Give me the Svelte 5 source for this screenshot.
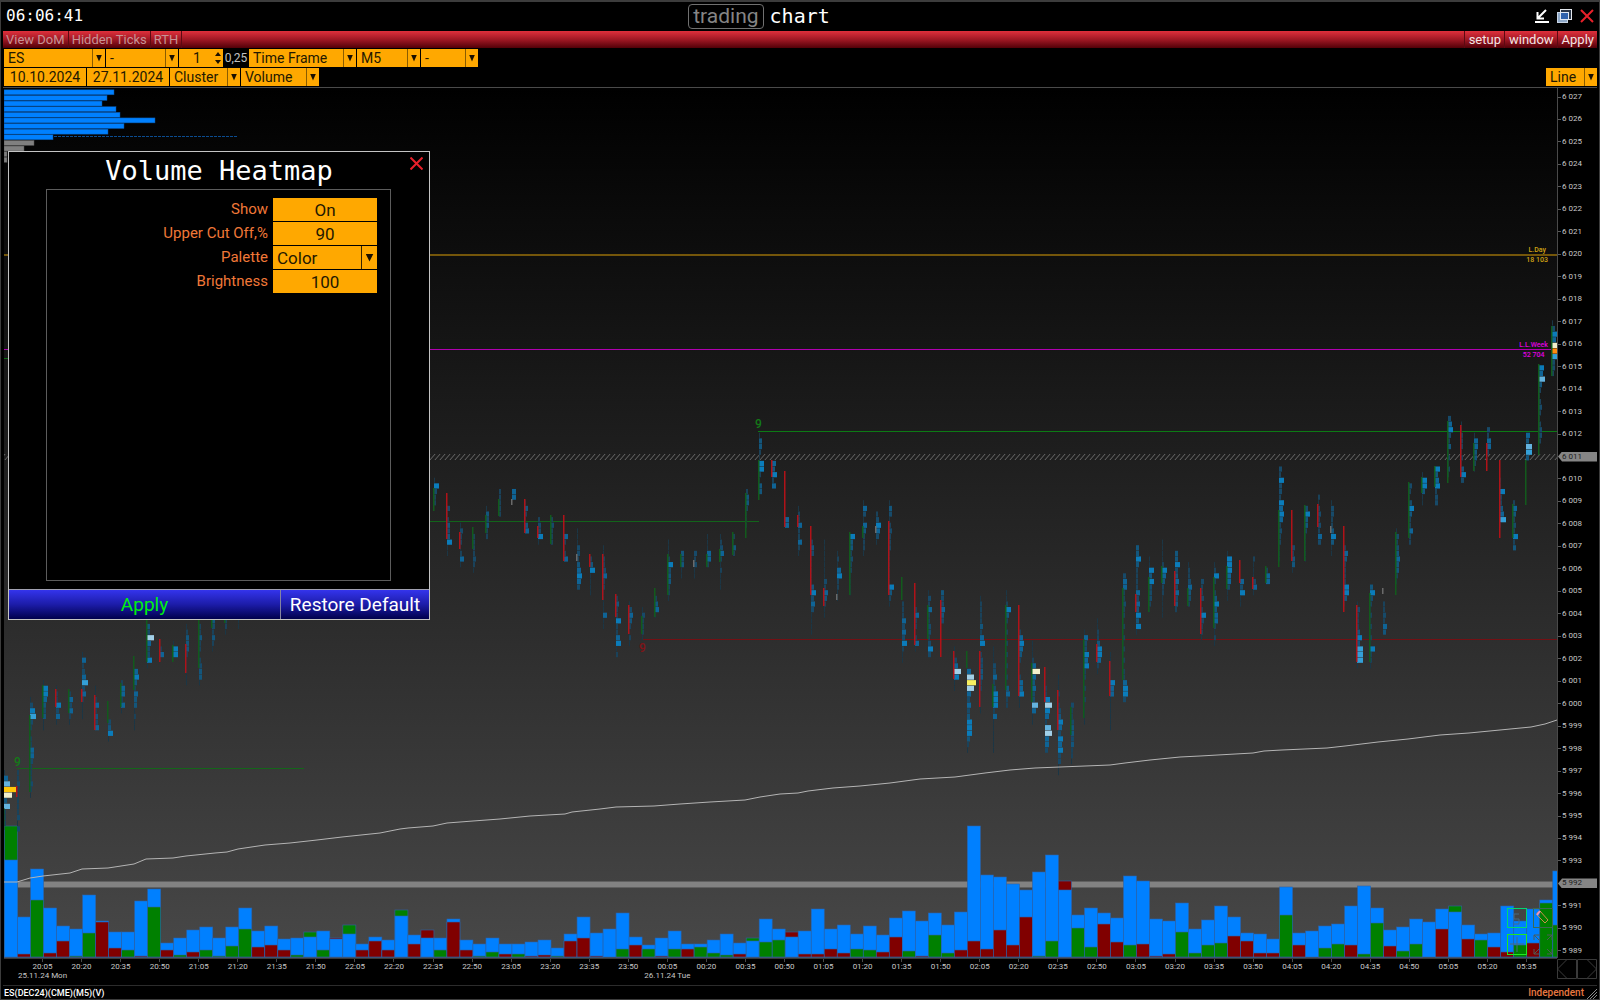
<script>
  // Volume bars, one per five-minute column: total height, colour and height of the second series.
  const volumeText =
    '97g131 40r3 88g57 49r4 31r16 28g1 62g24 36r35 25r9 25g7 56r1 68g50 14r7 19g2 27r5 30g7 19g1 30g11 49g28 26r10 ' +
    '31r12 18r7 19g2 20g25 26g7 18r19 23g32 13r7 20r16 17r7 41g47 22r13 19r27 19g7 38r35 17r7 13g1 19g5 13r3 13g3 ' +
    '15r1 17r2 9g1 23r16 40r19 24r1 28g0 44g8 20r12 12g8 19r1 26g8 13r8 13g10 17g4 23g2 14r3 16g19 38g15 28g17 ' +
    '20r25 26r3 48r3 28r8 32r4 23g8 31g7 22r5 39r20 46g6 36r1 44g22 32g4 45r7 131r16 82r8 80r27 73r12 67r40 85g1 ' +
    '102g16 67r76 42g29 49g10 44r33 39r15 81g12 76r13 38r1 36r3 54g25 28g4 37g12 51g14 40r21 24r16 23r4 18r4 70g42 24r12 ' +
    '26g0 31g9 33g13 51r12 71g3 49g34 27r11 30g6 38g13 35g0 48r28 45g51 32r18 23g17 24r10 51r5 36g12 48r14 57g54 86g32';

  // Cluster columns: column, body colour, body top, body bottom, first row y, row intensities from the top down.
  const clusterText = `0 g 808 830 769 047o937111
1 r 786 797 770 11211111202
2 g 715 792 697 025621011442111210
3 g 685 718 679 055432300
4 r 689 707 685 0115240
5 g 689 713 691 142410
6 r 689 702 652 041246241000
7 r 695 730 685 00141324
8 g 701 723 719 2350
9 g 683 707 679 144140
10 g 656 690 668 45314330100
11 g 590 662 623 32842250
12 r 639 662 646 14
13 g 645 662 640 055
14 r 644 673 623 01333100000
15 g 615 668 623 11311012330
16 g 600 628 617 321310
17 g 600 623 617 110
18 n 615 616 617 00
33 g 488 511 478 05211
34 r 493 539 506 201323500
35 r 532 549 523 02110140
36 g 527 549 532 1111210
37 g 515 533 506 032311
38 g 499 516 489 11111
39 n 499 505 489 44
40 r 499 533 500 031034
41 r 526 538 517 12250
42 g 515 544 515 12111
43 r 515 561 533 41014
44 n 554 561 528 00022134542
45 r 554 567 556 1350000
46 r 554 600 545 001124110000400
47 r 594 617 596 13115114501
48 r 605 634 601 02431010
49 g 616 634 606 021110
50 g 588 617 595 1340
51 g 554 595 539 00015233110
52 g 554 567 550 32300
53 n 560 567 550 21200
54 g 554 567 533 000441
55 g 549 562 534 0124101000
56 g 532 555 533 1031
57 g 493 538 489 1331000
58 g 460 500 433 03310551033
59 r 460 477 461 43514
60 r 471 527 517 44
61 r 515 527 506 011411410
62 r 526 595 539 13200000352420000
63 r 588 606 539 00000002143100
64 n 594 600 550 010451100
65 g 532 595 533 53312110000
66 g 526 538 500 0420431110
67 n 526 533 512 125420
68 r 521 595 500 0320121110000005310
69 g 577 600 601 11142425100
70 r 583 645 607 14110140
71 g 605 639 590 021411221252
72 r 600 657 590 322432
73 r 651 679 647 00248500
74 g 651 668 663 048y842423555310
75 r 651 707 596 011113145012233110000
76 g 684 707 646 0002241255514000000
77 g 605 690 590 001531010101010103411
78 r 605 696 630 14543100144500
79 g 663 702 641 000149434227400
80 r 667 702 680 0115854178442
81 r 690 730 674 000101235425452200
82 g 707 735 703 21123323110
83 g 639 718 630 04225451101010000
84 r 644 662 618 0011355410
85 r 661 696 652 00000544000000
86 g 588 680 573 24411211010101010114552
87 r 594 612 545 3353111142435350
88 g 577 612 556 0053522210
89 g 566 583 539 00001543110000
90 r 571 606 550 33523424231
91 g 588 606 562 01124321
92 r 588 634 578 21120152110
93 g 577 628 562 015101353441010
94 g 566 589 550 055544200
95 r 560 583 578 42500
96 r 577 589 556 1000240
97 g 566 583 567 144
98 g 510 567 467 21522154541211000
99 r 510 561 544 21330
100 g 505 561 506 2533100000
101 r 504 527 495 101212142
102 n 526 533 501 0221135300
103 r 526 612 544 14311115530
104 r 605 662 601 021113536660
105 g 593 662 584 352101010105110
106 n 588 594 601 112143
107 g 532 595 530 0212343310
108 g 482 538 484 21025311411
109 g 477 493 472 055300
110 g 466 487 467 5345122
111 g 421 483 415 24521301010
112 r 425 477 421 00111010352
113 g 443 471 432 0443310
114 r 443 471 427 214410
115 r 460 538 478 005113460
116 g 504 538 501 143121513
117 g 460 505 432 43763
118 g 364 455 364 54731012101221
119 g 326 376 320 02549p6221`;

  const profile = [
    [110, 'b'], [103, 'b'], [98, 'b'], [112, 'b'], [116, 'b'], [151, 'b'], [120, 'b'],
    [104, 'b'], [49, 'b'], [30, 'n'], [20, 'n'], [3, 'n'], [3, 'n']
  ];

  const shades = {
    0: [1, '#1b3645'], 1: [2, '#1a425a'], 2: [3, '#174a69'], 3: [3, '#13567c'], 4: [4, '#0f6496'],
    5: [5, '#0b7cba'], 6: [6, '#34a0d8'], 7: [6, '#64b3df'], 8: [7, '#a2d0e8'], 9: [8, '#f2f0cc'],
    y: [9, '#f8f060'], o: [12, '#ffc60a'], p: [8, '#ff8c10']
  };
  const bodyColors = { g: '#125a1c', r: '#b01218', n: '#6a6a6a' };

  const left = 4;
  const base = 957;
  const step = 13.01;
  const rowTop = 89.8;
  const rowStep = 5.622;

  const volumes = volumeText.split(' ').map((item, i) => {
    const [, total, kind, part] = item.match(/(\d+)([gr])(\d+)/);
    const bars = [
      { h: Number(total), fill: '#0080ff' },
      { h: Number(part), fill: kind === 'g' ? '#008000' : '#800000' }
    ];
    return { x: left + 0.6 + i * step, bars: bars.sort((a, b) => b.h - a.h) };
  });

  const clusters = clusterText.split('\n').map((line) => {
    const [col, kind, top, bottom, first, rows] = line.split(' ');
    const x = Math.round(left + 0.2 + Number(col) * step);
    const start = Math.round((Number(first) - rowTop) / rowStep);
    const cells = [...rows].map((code, i) => ({
      y: rowTop + (start + i) * rowStep,
      w: shades[code][0],
      fill: shades[code][1]
    }));
    return { x, top: Number(top), height: bottom - top, fill: bodyColors[kind], cells };
  });

  const average =
    '4,882 17,882 30,878 43,876 70,873 82,869 108,868 134,864 146,859 173,858 186,856 215,853 227,852 238,849 265,845 ' +
    '290,843 317,840 342,837 380,833 400,829 408,828 433,826 447,823 473,821 500,819 530,816 565,814 572,812 600,809 ' +
    '616,807 654,806 680,804 710,802 745,800 760,797 780,794 798,793 808,791 833,788 860,786 890,783 920,779 955,777 ' +
    '985,773 1010,770 1035,768 1060,767 1110,765 1125,763 1150,760 1180,757 1200,756 1253,753 1264,751 1282,750 ' +
    '1327,748 1345,746 1378,742 1408,739 1440,735 1469,733 1500,730 1531,727 1545,724 1557,720';

  const prices = Array.from({ length: 39 }, (_, i) => {
    const n = String(6027 - i);
    return { text: n[0] + ' ' + n.slice(1), tag: n === '6011' || n === '5992' };
  });

  const times = Array.from({ length: 39 }, (_, i) => {
    const m = (20 * 60 + 5 + i * 15) % 1440;
    const text = String(Math.floor(m / 60)).padStart(2, '0') + ':' + String(m % 60).padStart(2, '0');
    return { text, date: i === 0 ? '25.11.24 Mon' : i === 16 ? '26.11.24 Tue' : '' };
  });
</script>

{#snippet pick(label, value, size)}
  <span class="pick {size}">
    <select aria-label={label}><option>{value}</option></select>
    <span class="arrow" aria-hidden="true"></span>
  </span>
{/snippet}

<div class="app">
  <header>
    <time>06:06:41</time>
    <h1><span class="badge">trading</span><span class="word">chart</span></h1>
    <div class="window-buttons">
      <button aria-label="Minimize">
        <svg width="14" height="14" viewBox="0 0 14 14"><path d="M11 1 3 9M2.500 3v6.500H9M0 13h14" fill="none" stroke="#fff" stroke-width="2" /></svg>
      </button>
      <button aria-label="Maximize">
        <svg width="15" height="14" viewBox="0 0 15 14">
          <rect x="3.500" y=".5" width="11" height="10" fill="#2a3648" stroke="#e4e8ee" />
          <rect x=".5" y="3.500" width="10" height="10" fill="#8ea8c8" stroke="#c8d4e4" />
          <rect x="3.500" y="3.500" width="8" height="7" fill="#2f62ad" stroke="#dfe8f4" />
        </svg>
      </button>
      <button aria-label="Close">
        <svg width="14" height="14" viewBox="0 0 14 14"><path d="M1 1l12 12M13 1 1 13" stroke="#e8202a" stroke-width="2" /></svg>
      </button>
    </div>
  </header>

  <nav>
    <button class="muted">View DoM</button>
    <button class="muted">Hidden Ticks</button>
    <button class="muted">RTH</button>
    <span class="spring"></span>
    <button>setup</button>
    <button>window</button>
    <button>Apply</button>
  </nav>

  <div class="tools">
    <div class="tool-row">
      {@render pick('Symbol', 'ES', 'w101')}
      {@render pick('Contract', '-', 'w72')}
      <span class="spin">
        <input aria-label="Step" value="1" />
        <span class="spin-buttons">
          <button aria-label="Increase step"></button>
          <button aria-label="Decrease step" class="down"></button>
        </span>
      </span>
      <span class="tick">0,25</span>
      {@render pick('Period type', 'Time Frame', 'w107')}
      {@render pick('Period', 'M5', 'w63')}
      {@render pick('Session', '-', 'w57')}
    </div>
    <div class="tool-row">
      <input class="date" aria-label="From date" value="10.10.2024" />
      <input class="date" aria-label="To date" value="27.11.2024" />
      {@render pick('Chart type', 'Cluster', 'w70')}
      {@render pick('Cluster data', 'Volume', 'w78')}
      <span class="spring"></span>
      {@render pick('Drawing tool', 'Line', 'w51')}
    </div>
  </div>

  <main>
    <div class="plot">
      <svg class="canvas" viewBox="4 88 1553 870" preserveAspectRatio="none" aria-label="Price clusters and volume">
        <defs>
          <pattern id="hatch" width="5" height="6" patternUnits="userSpaceOnUse" y="454">
            <path d="M-1 7 6 -1M-6 7 1 -1M4 7 11 -1" stroke="#6a6a6a" stroke-width="1" fill="none" />
          </pattern>
        </defs>

        {#each profile as [w, kind], i}
          <rect x="4" y={rowTop + i * rowStep} width={w} height="5" fill={kind === 'b' ? '#0080ff' : '#808080'} stroke={kind === 'b' ? '#0a4d94' : '#505050'} stroke-width=".5" />
        {/each}
        <path d="M54 136.500H238" stroke="#0b4c90" stroke-dasharray="3 1" />

        <rect x="17" y="881" width="1540" height="7" fill="#606060" />
        <rect x="17" y="882" width="1540" height="5" fill="#828282" />

        {#each volumes as v}
          {#each v.bars as bar}
            <rect x={v.x} y={base - bar.h} width={step} height={bar.h} fill={bar.fill} stroke="#2c62a8" stroke-width=".6" />
          {/each}
        {/each}

        <rect x="4" y="454" width="1553" height="6" fill="url(#hatch)" />
        <rect x="4" y="254" width="1553" height="2" fill="#74560a" />
        <rect x="4" y="349" width="1553" height="1" fill="#b000b0" />
        <rect x="4" y="358" width="10" height="1" fill="#0c6a14" />
        <rect x="758" y="431" width="799" height="1" fill="#0c7a14" />
        <rect x="430" y="521" width="329" height="1" fill="#12641a" />
        <rect x="17" y="768" width="287" height="1" fill="#14661a" />
        <rect x="642" y="639" width="915" height="1" fill="#741014" />

        {#each clusters as c}
          {#each c.cells as cell}
            <rect x={c.x} y={cell.y} width={cell.w} height="5.200" fill={cell.fill} />
          {/each}
          <rect x={c.x - 1} y={c.top} width="1.500" height={c.height} fill={c.fill} />
        {/each}

        <polyline points={average} fill="none" stroke="#b4b4b4" stroke-width="1" />

        <g fill="none">
          <rect x="1507.500" y="908.500" width="19" height="19" stroke="#00d873" />
          <rect x="1507.500" y="934.500" width="19" height="20" stroke="#20e820" />
          <rect x="1533.500" y="908.500" width="19" height="19" stroke="#3c6a50" />
          <path d="M1519 914h-5v5h5v5h-5M1510 944h14M1517 937v15" stroke="#4a6a80" />
          <path d="M1537 913l3-2 8 9-3 3-8-8z" stroke="#c89048" />
          <path d="M1537 915l3-4" stroke="#f090c0" stroke-width="2" />
          <path d="M1534 940v-5h5M1534 935l5 5M1552 940v-5h-5M1552 935l-5 5M1534 949v5h5M1534 954l5-5M1552 949v5h-5M1552 954l-5-5" stroke="#4c5c56" />
        </g>
      </svg>
      <span class="mark day">L.Day<br />18 103</span>
      <span class="mark week">L.L.Week<br />52 704</span>
      <span class="nine first">9</span>
      <span class="nine second">9</span>
      <span class="nine low">9</span>
    </div>

    <div class="prices">
      {#each prices as p}
        <span class:tag={p.tag}>{p.text}</span>
      {/each}
    </div>

    <div class="times">
      {#each times as t}
        <span>{t.text}{#if t.date}<small>{t.date}</small>{/if}</span>
      {/each}
    </div>

    <div class="scroll">
      <button aria-label="Scroll back"><svg width="20" height="20" viewBox="0 0 20 20"><path d="M.5.500h19v19H.5zM10 .5.500 10l9.500 9.500" fill="none" stroke="#3a3a3a" /></svg></button>
      <button aria-label="Scroll forward"><svg width="20" height="20" viewBox="0 0 20 20"><path d="M.5.500h19v19H.5zM10 .5l9.500 9.500-9.500 9.500" fill="none" stroke="#3a3a3a" /></svg></button>
    </div>

    <form class="dialog" role="dialog" aria-labelledby="heatmap-title" onsubmit={(e) => e.preventDefault()}>
      <h2 id="heatmap-title">Volume Heatmap</h2>
      <button type="button" class="close" aria-label="Close dialog">
        <svg width="13" height="13" viewBox="0 0 13 13"><path d="M.5.500l12 12M12.500.5l-12 12" stroke="#e8202a" stroke-width="2" /></svg>
      </button>
      <div class="panel">
        <label for="show">Show</label>
        <input id="show" value="On" />
        <label for="cutoff">Upper Cut Off,%</label>
        <input id="cutoff" value="90" />
        <label for="palette">Palette</label>
        <span class="pick">
          <select id="palette"><option>Color</option></select>
          <span class="arrow" aria-hidden="true"></span>
        </span>
        <label for="brightness">Brightness</label>
        <input id="brightness" value="100" />
      </div>
      <div class="actions">
        <button class="apply">Apply</button>
        <button type="button">Restore Default</button>
      </div>
    </form>
  </main>

  <footer>
    <span>ES(DEC24)(CME)(M5)(V)</span>
    <span class="mode">Independent</span>
    <svg width="10" height="12" viewBox="0 0 10 12"><path d="M0 12 10 2M3 12l7-7M6 12l4-4" stroke="#8a8a8a" /></svg>
  </footer>
</div>

<style>
  :global(body) {
    margin: 0;
    background: #000;
  }

  .app {
    box-sizing: border-box;
    min-height: 100vh;
    display: grid;
    grid-template-rows: 30px 17px 40px 1fr 14px;
    grid-template-columns: minmax(0, 1fr);
    padding: 1px 2px 0;
    border: solid #3c3c3c;
    border-width: 0 1px 1px;
    box-shadow: inset 0 2px #3c3c3c;
    background: #000;
    color: #fff;
    font-family: Roboto, 'Liberation Sans', sans-serif;
  }

  button,
  input,
  select {
    margin: 0;
    border: 0;
    padding: 0;
    border-radius: 0;
    background: none;
    color: inherit;
    font: inherit;
  }

  svg {
    display: block;
  }

  header {
    display: grid;
    grid-template-columns: 1fr auto 1fr;
    align-items: center;
    padding: 0 3px;
  }

  time {
    font: 16px/20px 'DejaVu Sans Mono', monospace;
  }

  h1 {
    display: flex;
    align-items: center;
    gap: 6px;
    margin: 0;
    padding-right: 82px;
    font-weight: 400;
    font-size: 20px;
    line-height: 23px;
  }

  .badge {
    padding: 0 4px;
    border: 1px solid #707070;
    border-radius: 4px;
    color: #858585;
    font-size: 21px;
  }

  .word {
    font-family: 'DejaVu Sans Mono', monospace;
  }

  .window-buttons {
    display: flex;
    justify-content: flex-end;
    gap: 8px;
  }

  nav {
    display: flex;
    background: linear-gradient(#e0303c, #a01824 50%, #520008);
    font-size: 13px;
    line-height: 17px;
  }

  nav button {
    padding: 0 3px 0 4px;
    border-left: 1px solid #5c0a12;
    color: #f4e4e4;
  }

  nav .muted {
    padding: 0 3px;
    border: solid #5c0a12;
    border-width: 0 1px 0 0;
    color: #c89496;
  }

  .spring {
    flex: 1;
  }

  .tools {
    display: grid;
    grid-template-rows: 18px 18px;
    gap: 1px;
    padding: 1px 0 0 1px;
    border-bottom: 1px solid #4a4a4a;
    font-size: 14px;
    line-height: 18px;
  }

  .tool-row {
    display: flex;
    gap: 1px;
  }

  .tools input,
  .pick {
    background: #ffa800;
    color: #241800;
  }

  .pick {
    display: flex;
    min-width: 0;
  }

  .pick select {
    flex: 1;
    min-width: 0;
    padding-left: 4px;
    appearance: none;
  }

  .arrow {
    flex: none;
    width: 12px;
    border-left: 1px solid #8a5c00;
    display: grid;
    place-items: center;
  }

  .arrow::before,
  .spin-buttons button {
    content: '';
    width: 6px;
    height: 7px;
    background: #1a1000;
    clip-path: polygon(0 0, 100% 0, 50% 100%);
  }

  .w101 { width: 101px; }
  .w72 { width: 72px; }
  .w107 { width: 107px; }
  .w63 { width: 63px; }
  .w57 { width: 57px; }
  .w70 { width: 70px; }
  .w78 { width: 78px; }
  .w51 { width: 51px; }

  .spin {
    display: flex;
    width: 44px;
    background: #ffa800;
  }

  .spin input {
    flex: 1;
    min-width: 0;
    text-align: center;
  }

  .spin-buttons {
    display: flex;
    flex-direction: column;
    justify-content: center;
    gap: 4px;
    padding-right: 2px;
  }

  .spin-buttons button {
    height: 4px;
    clip-path: polygon(50% 0, 100% 100%, 0 100%);
  }

  .spin-buttons .down {
    clip-path: polygon(0 0, 100% 0, 50% 100%);
  }

  .tick {
    width: 24px;
    color: #c0c0c0;
    font-size: 12px;
    text-align: center;
  }

  .date {
    width: 82px;
    text-align: center;
  }

  main {
    position: relative;
    display: grid;
    grid-template-columns: minmax(0, 1fr) 40px;
    grid-template-rows: minmax(0, 1fr) 27px;
    padding-left: 1px;
  }

  .plot {
    position: relative;
    background: linear-gradient(#000, #484848);
  }

  .canvas {
    position: absolute;
    inset: 0;
    width: 100%;
    height: 100%;
  }

  .mark {
    position: absolute;
    font-weight: 500;
    font-size: 7px;
    line-height: 10px;
    text-align: center;
  }

  .day {
    right: 9px;
    top: 18%;
    color: #d0a414;
  }

  .week {
    right: 9px;
    top: 29%;
    color: #e000e0;
  }

  .nine {
    position: absolute;
    color: #137a18;
    font-weight: 500;
    font-size: 12px;
    line-height: 12px;
  }

  .first {
    left: 10px;
    top: 668px;
  }

  .second {
    left: 751px;
    top: 330px;
  }

  .low {
    left: 635px;
    top: 554px;
    color: #801418;
  }

  .prices {
    display: flex;
    flex-direction: column;
    justify-content: space-between;
    padding: 4px 0 2px;
    border-left: 1px solid #4a4a4a;
    color: #c8c8c8;
    font-size: 8px;
    line-height: 10px;
  }

  .prices span {
    display: flex;
    align-items: center;
    gap: 1px;
  }

  .prices span::before {
    content: '';
    width: 3px;
    height: 1px;
    background: #5a5a5a;
  }

  .prices .tag {
    background: #858585;
    color: #1c1c1c;
    clip-path: polygon(0 50%, 4px 0, 100% 0, 100% 100%, 4px 100%);
  }

  .prices .tag::before {
    background: none;
  }

  .times {
    display: grid;
    grid-template-columns: repeat(39, minmax(0, 1fr));
    padding: 0 11px 0 19px;
    border-top: 1px solid #3a3a3a;
    color: #c8c8c8;
    font-size: 8px;
    line-height: 9px;
  }

  .times span {
    display: flex;
    flex-direction: column;
    align-items: center;
    white-space: nowrap;
  }

  .times span::before {
    content: '';
    width: 1px;
    height: 3px;
    background: #4a4a4a;
  }

  .times small {
    font-size: 8px;
  }

  .scroll {
    display: flex;
    padding-top: 1px;
  }

  .scroll button {
    height: 20px;
  }

  .dialog {
    position: absolute;
    left: 5px;
    top: 63px;
    box-sizing: border-box;
    width: 422px;
    height: 469px;
    display: grid;
    grid-template-rows: 37px 1fr 30px;
    border: 1px solid #c4c4c4;
    background: #000;
  }

  h2 {
    margin: 0;
    font: 27px/38px 'DejaVu Sans Mono', monospace;
    text-align: center;
  }

  .close {
    position: absolute;
    top: 5px;
    right: 6px;
  }

  .panel {
    display: grid;
    grid-template-columns: 1fr 104px;
    grid-auto-rows: 23px;
    align-content: start;
    gap: 1px 5px;
    margin: 0 38px 8px 37px;
    padding: 8px 13px;
    border: 1px solid #5c5c5c;
    font-size: 17px;
  }

  .panel label {
    color: #f07838;
    font-size: 15px;
    line-height: 23px;
    text-align: right;
  }

  .panel input {
    min-width: 0;
    background: #ffa800;
    color: #241800;
    text-align: center;
  }

  .panel .arrow {
    width: 15px;
    border-color: #3a2600;
  }

  .panel .arrow::before {
    width: 8px;
    height: 8px;
  }

  .actions {
    display: grid;
    grid-template-columns: 1fr 149px;
    border-top: 1px solid #a0a0b0;
    font-size: 19px;
    line-height: 28px;
  }

  .actions button {
    background: linear-gradient(#3434ec, #1c1ca8 50%, #00004c);
    border-left: 1px solid #8484a0;
  }

  .actions .apply {
    border: 0;
    color: #00f010;
  }

  footer {
    display: flex;
    align-items: center;
    gap: 3px;
    padding: 0 0 0 1px;
    border-top: 1px solid #2c2c2c;
    font-weight: 500;
    font-size: 9px;
    line-height: 12px;
  }

  .mode {
    margin-left: auto;
    color: #e87840;
    font-size: 10px;
  }
</style>
